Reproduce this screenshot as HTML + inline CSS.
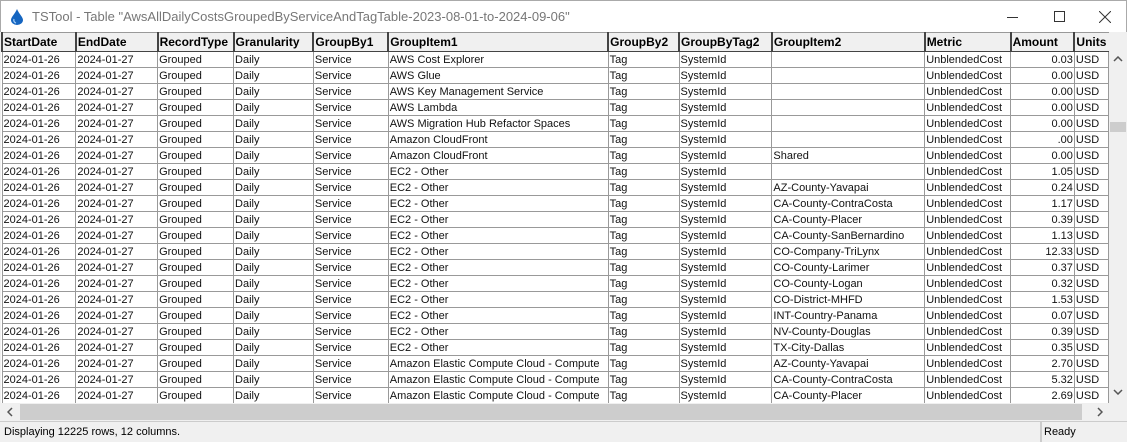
<!DOCTYPE html>
<html><head><style>
*{margin:0;padding:0;box-sizing:border-box}
body{width:1127px;height:441px;overflow:hidden;background:#f0f0f0;font-family:"Liberation Sans",Arial,sans-serif;position:relative}
#title{position:absolute;left:0;top:0;width:1127px;height:32px;background:#fff;border:1px solid #aaa;border-bottom:none}
#title .t{position:absolute;left:31px;top:8px;font-size:13px;color:#777}
#grid{position:absolute;left:1px;top:32px;width:1108px;height:371px;background:#fff;overflow:hidden}
table{border-collapse:collapse;table-layout:fixed;font-size:11px}
th{background:#f0f0f0;font-weight:bold;font-size:12px;text-align:left;height:19px;border-left:2px solid #444;border-top:1px solid #999;border-bottom:1px solid #444;padding-left:1px;white-space:nowrap;overflow:hidden}
td{height:16px;border:1px solid #999;padding-left:1px;white-space:nowrap;overflow:hidden;color:#111}
td.r{text-align:right;padding-right:1px}
#vs{position:absolute;left:1109px;top:32px;width:18px;height:371px;background:#f0f0f0}
#hs{position:absolute;left:1px;top:403px;width:1108px;height:18px;background:#f0f0f0}
#status{position:absolute;left:0;top:421px;width:1127px;height:20px;border-top:1px solid #ccc;font-size:11px}
</style></head><body>
<div id="title">
<svg style="position:absolute;left:10px;top:8px" width="12" height="16" viewBox="0 0 12 16"><path d="M6 0 C4 5 0 8 0 11 A6 5 0 0 0 12 11 C12 8 8 5 6 0Z" fill="#1565c0"/><path d="M3 10 A3 3 0 0 0 5 14" stroke="#9cc9f5" stroke-width="1.3" fill="none"/></svg>
<span class="t">TSTool - Table "AwsAllDailyCostsGroupedByServiceAndTagTable-2023-08-01-to-2024-09-06"</span>
<div style="position:absolute;left:1006px;top:16px;width:11px;height:1px;background:#333"></div>
<div style="position:absolute;left:1053px;top:10px;width:11px;height:11px;border:1px solid #333"></div>
<svg style="position:absolute;left:1098px;top:10px" width="12" height="12"><path d="M0 0L12 12M12 0L0 12" stroke="#333" stroke-width="1"/></svg>
</div>
<div id="grid"><table>
<colgroup><col style="width:74px"><col style="width:82px"><col style="width:76px"><col style="width:80px"><col style="width:75px"><col style="width:220px"><col style="width:71px"><col style="width:93px"><col style="width:153px"><col style="width:86px"><col style="width:64px"><col style="width:34px"></colgroup>
<tr><th>StartDate</th><th>EndDate</th><th>RecordType</th><th>Granularity</th><th>GroupBy1</th><th>GroupItem1</th><th>GroupBy2</th><th>GroupByTag2</th><th>GroupItem2</th><th>Metric</th><th>Amount</th><th>Units</th></tr>
<tbody id="tb"></tbody>
</table></div>
<div id="vs">
<svg style="position:absolute;left:4px;top:24px" width="10" height="6"><path d="M1 5L5 1L9 5" stroke="#555" stroke-width="1.5" fill="none"/></svg>
<div style="position:absolute;left:1px;top:90px;width:16px;height:10px;background:#cdcdcd"></div>
<svg style="position:absolute;left:4px;top:357px" width="10" height="6"><path d="M1 1L5 5L9 1" stroke="#555" stroke-width="1.5" fill="none"/></svg>
</div>
<div id="hs">
<svg style="position:absolute;left:6px;top:4px" width="6" height="10"><path d="M5 1L1 5L5 9" stroke="#555" stroke-width="1.5" fill="none"/></svg>
<div style="position:absolute;left:19px;top:1px;width:1062px;height:16px;background:#cdcdcd"></div>
<svg style="position:absolute;left:1096px;top:4px" width="6" height="10"><path d="M1 1L5 5L1 9" stroke="#555" stroke-width="1.5" fill="none"/></svg>
</div>
<div id="status">
<span style="position:absolute;left:4px;top:4px">Displaying 12225 rows, 12 columns.</span>
<div style="position:absolute;left:1040px;top:0;width:2px;height:20px;background:#ccc"></div>
<span style="position:absolute;left:1044px;top:4px">Ready</span>
</div>
<script>
var R=[["AWS Cost Explorer","","0.03"],["AWS Glue","","0.00"],["AWS Key Management Service","","0.00"],["AWS Lambda","","0.00"],["AWS Migration Hub Refactor Spaces","","0.00"],["Amazon CloudFront","",".00"],["Amazon CloudFront","Shared","0.00"],["EC2 - Other","","1.05"],["EC2 - Other","AZ-County-Yavapai","0.24"],["EC2 - Other","CA-County-ContraCosta","1.17"],["EC2 - Other","CA-County-Placer","0.39"],["EC2 - Other","CA-County-SanBernardino","1.13"],["EC2 - Other","CO-Company-TriLynx","12.33"],["EC2 - Other","CO-County-Larimer","0.37"],["EC2 - Other","CO-County-Logan","0.32"],["EC2 - Other","CO-District-MHFD","1.53"],["EC2 - Other","INT-Country-Panama","0.07"],["EC2 - Other","NV-County-Douglas","0.39"],["EC2 - Other","TX-City-Dallas","0.35"],["Amazon Elastic Compute Cloud - Compute","AZ-County-Yavapai","2.70"],["Amazon Elastic Compute Cloud - Compute","CA-County-ContraCosta","5.32"],["Amazon Elastic Compute Cloud - Compute","CA-County-Placer","2.69"]];
var h="";R.forEach(function(r){h+="<tr><td>2024-01-26</td><td>2024-01-27</td><td>Grouped</td><td>Daily</td><td>Service</td><td>"+r[0]+"</td><td>Tag</td><td>SystemId</td><td>"+r[1]+"</td><td>UnblendedCost</td><td class='r'>"+r[2]+"</td><td>USD</td></tr>";});
document.getElementById("tb").innerHTML=h;
</script>
</body></html>
